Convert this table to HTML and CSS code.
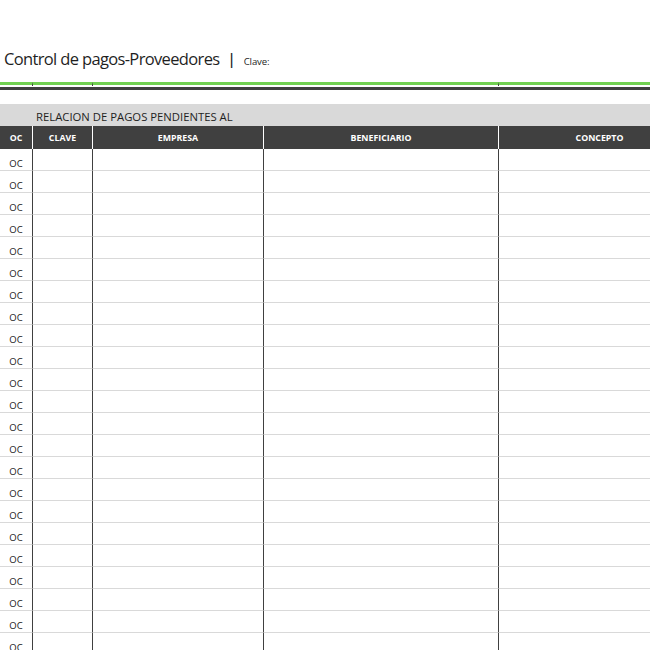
FILE: index.html
```html
<!DOCTYPE html>
<html lang="es">
<head>
<meta charset="utf-8">
<title>Control de pagos-Proveedores</title>
<link rel="stylesheet" href="styles.css">
</head>
<body>
<div class="sheet">
  <header class="title-row">
    <span class="title">Control de pagos-Proveedores</span>
    <span class="bar">|</span>
    <span class="clave">Clave:</span>
  </header>
  <div class="rule-green">
    <span class="tick"></span><span class="tick"></span><span></span><span class="tick"></span><span></span>
  </div>
  <div class="rule-dark"></div>
  <div class="band"><span>RELACION DE PAGOS PENDIENTES AL</span></div>
  <div class="grid" id="grid">
    <div class="hd">OC</div><div class="hd">CLAVE</div><div class="hd">EMPRESA</div><div class="hd">BENEFICIARIO</div><div class="hd last">CONCEPTO</div>
  </div>
</div>
<script>
  var g = document.getElementById('grid');
  for (var i = 0; i < 23; i++) {
    var html = '<div class="cell oc">OC</div><div class="cell"></div><div class="cell"></div><div class="cell"></div><div class="cell last"></div>';
    g.insertAdjacentHTML('beforeend', html);
  }
</script>
</body>
</html>
```

FILE: styles.css
```css
* { box-sizing: border-box; }
html, body { margin: 0; padding: 0; background: #fff; }
body { width: 650px; height: 650px; overflow: hidden; font-family: "Open Sans", "Liberation Sans", sans-serif; color: #1f1f1f; }
.sheet { width: 700px; }

.title-row { height: 82px; padding: 47px 0 0 4px; display: flex; align-items: baseline; white-space: nowrap; }
.title { font-size: 16.5px; letter-spacing: -0.65px; color: #1f1f1f; }
.bar { font-size: 16px; margin-left: 10px; color: #1f1f1f; font-family: "Liberation Sans", sans-serif; }
.clave { font-size: 9.6px; letter-spacing: -0.1px; margin-left: 10px; color: #1f1f1f; }

.rule-green { display: grid; grid-template-columns: 33px 60px 171px 235px 201px; height: 4px; }
.rule-green span { border-top: 3px solid #72d152; }
.rule-green .tick { border-right: 1px solid #404040; }

.rule-dark { height: 3px; background: #404040; margin-top: 1px; }

.band { margin-top: 14px; height: 22px; background: #d9d9d9; padding: 5px 0 0 36px; font-size: 11.3px; color: #1f1f1f; white-space: nowrap; }

.grid { display: grid; grid-template-columns: 33px 60px 171px 235px 201px; grid-template-rows: 23px; grid-auto-rows: 22px; }
.hd { background: #404040; color: #fff; font-weight: 700; font-size: 8.8px; display: flex; align-items: center; justify-content: center; border-right: 1px solid #fff; padding-top: 1px; }
.hd.last { border-right: 0; }
.cell { border-right: 1px solid #404040; border-bottom: 1px solid #d9d9d9; }
.cell.last { border-right: 0; }
.oc { font-size: 9.5px; color: #1a1a1a; display: flex; justify-content: center; align-items: flex-end; }
```
